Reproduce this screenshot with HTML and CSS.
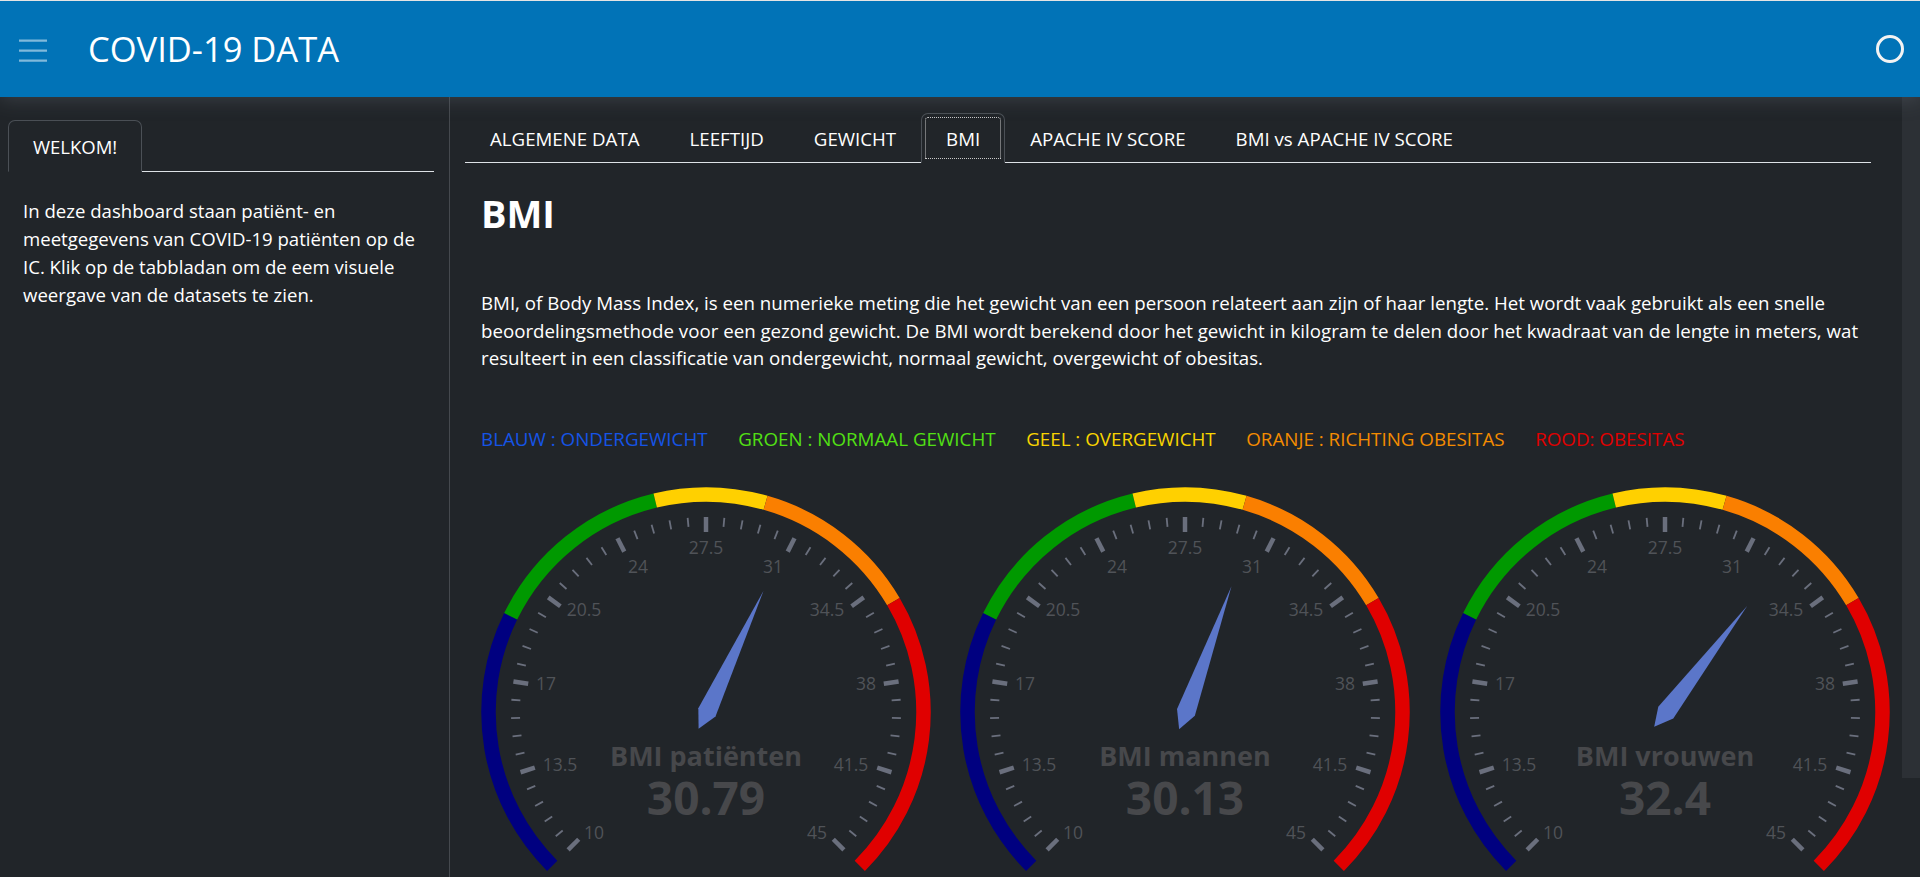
FILE: index.html
```html
<!DOCTYPE html>
<html lang="nl">
<head>
<meta charset="utf-8">
<title>COVID-19 DATA</title>
<link rel="stylesheet" href="styles.css">
</head>
<body>
<svg class="defs" aria-hidden="true">
  <defs>
    <g id="dial">
      <path class="band band-blue" d="M -153.80 153.80 A 217.5 217.5 0 0 1 -195.32 -95.69"/>
      <path class="band band-green" d="M -195.32 -95.69 A 217.5 217.5 0 0 1 -50.78 -211.49"/>
      <path class="band band-yellow" d="M -50.78 -211.49 A 217.5 217.5 0 0 1 59.59 -209.18"/>
      <path class="band band-orange" d="M 59.59 -209.18 A 217.5 217.5 0 0 1 187.40 -110.39"/>
      <path class="band band-red" d="M 187.40 -110.39 A 217.5 217.5 0 0 1 153.80 153.80"/>
      <g class="ticks">
        <line class="tick major" y1="-195" y2="-180" transform="rotate(-135)"/>
        <line class="tick" y1="-195" y2="-186" transform="rotate(-129.6)"/>
        <line class="tick" y1="-195" y2="-186" transform="rotate(-124.2)"/>
        <line class="tick" y1="-195" y2="-186" transform="rotate(-118.8)"/>
        <line class="tick" y1="-195" y2="-186" transform="rotate(-113.4)"/>
        <line class="tick major" y1="-195" y2="-180" transform="rotate(-108)"/>
        <line class="tick" y1="-195" y2="-186" transform="rotate(-102.6)"/>
        <line class="tick" y1="-195" y2="-186" transform="rotate(-97.2)"/>
        <line class="tick" y1="-195" y2="-186" transform="rotate(-91.8)"/>
        <line class="tick" y1="-195" y2="-186" transform="rotate(-86.4)"/>
        <line class="tick major" y1="-195" y2="-180" transform="rotate(-81)"/>
        <line class="tick" y1="-195" y2="-186" transform="rotate(-75.6)"/>
        <line class="tick" y1="-195" y2="-186" transform="rotate(-70.2)"/>
        <line class="tick" y1="-195" y2="-186" transform="rotate(-64.8)"/>
        <line class="tick" y1="-195" y2="-186" transform="rotate(-59.4)"/>
        <line class="tick major" y1="-195" y2="-180" transform="rotate(-54)"/>
        <line class="tick" y1="-195" y2="-186" transform="rotate(-48.6)"/>
        <line class="tick" y1="-195" y2="-186" transform="rotate(-43.2)"/>
        <line class="tick" y1="-195" y2="-186" transform="rotate(-37.8)"/>
        <line class="tick" y1="-195" y2="-186" transform="rotate(-32.4)"/>
        <line class="tick major" y1="-195" y2="-180" transform="rotate(-27)"/>
        <line class="tick" y1="-195" y2="-186" transform="rotate(-21.6)"/>
        <line class="tick" y1="-195" y2="-186" transform="rotate(-16.2)"/>
        <line class="tick" y1="-195" y2="-186" transform="rotate(-10.8)"/>
        <line class="tick" y1="-195" y2="-186" transform="rotate(-5.4)"/>
        <line class="tick major" y1="-195" y2="-180" transform="rotate(0)"/>
        <line class="tick" y1="-195" y2="-186" transform="rotate(5.4)"/>
        <line class="tick" y1="-195" y2="-186" transform="rotate(10.8)"/>
        <line class="tick" y1="-195" y2="-186" transform="rotate(16.2)"/>
        <line class="tick" y1="-195" y2="-186" transform="rotate(21.6)"/>
        <line class="tick major" y1="-195" y2="-180" transform="rotate(27)"/>
        <line class="tick" y1="-195" y2="-186" transform="rotate(32.4)"/>
        <line class="tick" y1="-195" y2="-186" transform="rotate(37.8)"/>
        <line class="tick" y1="-195" y2="-186" transform="rotate(43.2)"/>
        <line class="tick" y1="-195" y2="-186" transform="rotate(48.6)"/>
        <line class="tick major" y1="-195" y2="-180" transform="rotate(54)"/>
        <line class="tick" y1="-195" y2="-186" transform="rotate(59.4)"/>
        <line class="tick" y1="-195" y2="-186" transform="rotate(64.8)"/>
        <line class="tick" y1="-195" y2="-186" transform="rotate(70.2)"/>
        <line class="tick" y1="-195" y2="-186" transform="rotate(75.6)"/>
        <line class="tick major" y1="-195" y2="-180" transform="rotate(81)"/>
        <line class="tick" y1="-195" y2="-186" transform="rotate(86.4)"/>
        <line class="tick" y1="-195" y2="-186" transform="rotate(91.8)"/>
        <line class="tick" y1="-195" y2="-186" transform="rotate(97.2)"/>
        <line class="tick" y1="-195" y2="-186" transform="rotate(102.6)"/>
        <line class="tick major" y1="-195" y2="-180" transform="rotate(108)"/>
        <line class="tick" y1="-195" y2="-186" transform="rotate(113.4)"/>
        <line class="tick" y1="-195" y2="-186" transform="rotate(118.8)"/>
        <line class="tick" y1="-195" y2="-186" transform="rotate(124.2)"/>
        <line class="tick" y1="-195" y2="-186" transform="rotate(129.6)"/>
        <line class="tick major" y1="-195" y2="-180" transform="rotate(135)"/>
      </g>
      <g class="scale">
        <text x="-112" y="127.2">10</text>
        <text x="-146" y="58.7">13.5</text>
        <text x="-160" y="-21.8">17</text>
        <text x="-122" y="-96.3">20.5</text>
        <text x="-68" y="-138.8">24</text>
        <text x="0" y="-157.8">27.5</text>
        <text x="67" y="-138.8">31</text>
        <text x="121" y="-96.3">34.5</text>
        <text x="160" y="-21.8">38</text>
        <text x="145" y="58.7">41.5</text>
        <text x="111" y="127.2">45</text>
      </g>
    </g>
  </defs>
</svg>

<header class="topbar">
  <button class="menu-btn" type="button" aria-label="Menu">
    <svg class="menu-icon" viewBox="0 0 28 28" width="28" height="28"><path d="M0 5.7h28M0 15.7h28M0 25.7h28"/></svg>
  </button>
  <h1 class="brand">COVID-19 DATA</h1>
  <span class="spinner" aria-hidden="true"></span>
</header>

<div class="layout">
  <aside class="sidebar">
    <nav class="tabs side-tabs">
      <a class="tab active" href="#">WELKOM!</a>
    </nav>
    <p class="intro">In deze dashboard staan patiënt- en meetgegevens van COVID-19 patiënten op de IC. Klik op de tabbladan om de eem visuele weergave van de datasets te zien.</p>
  </aside>

  <main class="main">
    <nav class="tabs main-tabs">
      <a class="tab" href="#">ALGEMENE DATA</a>
      <a class="tab" href="#">LEEFTIJD</a>
      <a class="tab" href="#">GEWICHT</a>
      <a class="tab active focused" href="#">BMI</a>
      <a class="tab" href="#">APACHE IV SCORE</a>
      <a class="tab" href="#">BMI vs APACHE IV SCORE</a>
    </nav>

    <section class="pane">
      <h2 class="pane-title">BMI</h2>
      <p class="pane-text">BMI, of Body Mass Index, is een numerieke meting die het gewicht van een persoon relateert aan zijn of haar lengte. Het wordt vaak gebruikt als een snelle<br>beoordelingsmethode voor een gezond gewicht. De BMI wordt berekend door het gewicht in kilogram te delen door het kwadraat van de lengte in meters, wat<br>resulteert in een classificatie van ondergewicht, normaal gewicht, overgewicht of obesitas.</p>

      <div class="legend">
        <span class="legend-item l-blue">BLAUW : ONDERGEWICHT</span>
        <span class="legend-item l-green">GROEN : NORMAAL GEWICHT</span>
        <span class="legend-item l-yellow">GEEL : OVERGEWICHT</span>
        <span class="legend-item l-orange">ORANJE : RICHTING OBESITAS</span>
        <span class="legend-item l-red">ROOD: OBESITAS</span>
      </div>

      <div class="gauges">
        <svg class="gauge" viewBox="-235 -230 470 460" width="470" height="460" role="img" aria-label="BMI patiënten 30.79">
          <use href="#dial"/>
          <text class="g-title" x="0" y="53.5">BMI patiënten</text>
          <text class="g-value" x="0" y="102.5">30.79</text>
          <polygon class="needle" points="0,-134 10.5,0 0.5,18.3 -8.5,0" transform="rotate(25.38)"/>
        </svg>
        <svg class="gauge" viewBox="-235 -230 470 460" width="470" height="460" role="img" aria-label="BMI mannen 30.13">
          <use href="#dial"/>
          <text class="g-title" x="0" y="53.5">BMI mannen</text>
          <text class="g-value" x="0" y="102.5">30.13</text>
          <polygon class="needle" points="0,-134 10.5,0 0.5,18.3 -8.5,0" transform="rotate(20.29)"/>
        </svg>
        <svg class="gauge" viewBox="-235 -230 470 460" width="470" height="460" role="img" aria-label="BMI vrouwen 32.4">
          <use href="#dial"/>
          <text class="g-title" x="0" y="53.5">BMI vrouwen</text>
          <text class="g-value" x="0" y="102.5">32.4</text>
          <polygon class="needle" points="0,-134 10.5,0 0.5,18.3 -8.5,0" transform="rotate(37.8)"/>
        </svg>
      </div>
    </section>
  </main>

  <div class="scrollbar" aria-hidden="true">
    <div class="scroll-thumb"></div>
  </div>
</div>
</body>
</html>
```

FILE: styles.css
```css
* { box-sizing: border-box; }

html, body {
  margin: 0;
  height: 100%;
}

body {
  background: #212529;
  color: #fff;
  font-family: "Open Sans", "Noto Sans", sans-serif;
  overflow: hidden;
}

.defs {
  position: absolute;
  width: 0;
  height: 0;
  overflow: hidden;
}

/* ---------- top bar ---------- */
.topbar {
  position: relative;
  z-index: 2;
  height: 97px;
  border-top: 1px solid #e4e4e4;
  background: #0173b7;
  display: flex;
  align-items: center;
  padding: 0 16px 0 19px;
  box-shadow: 0 2px 18px rgba(110, 118, 128, 0.35);
}

.menu-btn {
  display: flex;
  width: 28px;
  height: 28px;
  padding: 0;
  border: 0;
  background: none;
}

.menu-icon {
  fill: none;
  stroke: rgba(255, 255, 255, 0.5);
  stroke-width: 2.2;
}

.brand {
  margin: 0 0 0 41px;
  font-size: 34.5px;
  font-weight: 400;
  line-height: 1.2;
  color: #fff;
}

.spinner {
  margin-left: auto;
  width: 28px;
  height: 28px;
  border: 3px solid #f3f3f3;
  border-radius: 50%;
}

/* ---------- layout ---------- */
.layout {
  display: flex;
  height: 780px;
}

.sidebar {
  flex: none;
  width: 450px;
  border-right: 1px solid #45494e;
  padding: 23px 15px 0 8px;
}

.main {
  flex: 1;
  min-width: 0;
  overflow: hidden;
  padding: 16px 31px 0 15px;
}

.scrollbar {
  flex: none;
  width: 18px;
  background: #212529;
}

.scroll-thumb {
  height: 681px;
  background: #2c3035;
}

/* ---------- tabs ---------- */
.tabs {
  display: flex;
  border-bottom: 1px solid #dee2e6;
}

.tab {
  display: block;
  padding: 11.5px 24px;
  margin-bottom: -1px;
  border: 1px solid transparent;
  border-radius: 7px 7px 0 0;
  font-size: 18.7px;
  line-height: 25px;
  color: #fff;
  text-decoration: none;
  white-space: nowrap;
}

.side-tabs .tab {
  padding: 12.5px 24px;
  font-size: 18.5px;
}

.tab.active {
  border-color: #4b5056 #4b5056 transparent;
  background: #212529;
}

.tab.focused {
  outline: 1px dotted #c9c9c9;
  outline-offset: -5px;
}

.intro {
  margin: 24.6px 0 0 15px;
  font-size: 18.6px;
  line-height: 28.3px;
}

/* ---------- BMI pane ---------- */
.pane {
  padding: 25.5px 0 48px 16px;
}

.pane-title {
  margin: 0;
  font-size: 38px;
  font-weight: 700;
  line-height: 48px;
}

.pane-text {
  margin: 52.5px 0 0;
  font-size: 18.7px;
  line-height: 27.6px;
  white-space: nowrap;
}

.legend {
  display: flex;
  gap: 30.5px;
  margin-top: 54.9px;
  font-size: 18.8px;
  line-height: 25px;
}

.l-blue { color: #1554e6; }
.l-green { color: #52e014; }
.l-yellow { color: #f8d400; }
.l-orange { color: #f48c00; }
.l-red { color: #e00000; }

.gauges {
  display: flex;
  gap: 9.6px;
  margin: 30.2px 0 0 -10.5px;
}

.gauge {
  flex: none;
  display: block;
  overflow: visible;
}

.band {
  fill: none;
  stroke-width: 14.5;
}
.band-blue { stroke: #000080; }
.band-green { stroke: #009900; }
.band-yellow { stroke: #ffd000; }
.band-orange { stroke: #fa7f00; }
.band-red { stroke: #e00000; }

.tick {
  stroke: #6a6f7d;
  stroke-width: 1.8;
}
.tick.major { stroke-width: 4.5; }

.scale text {
  font-family: "Open Sans", "Noto Sans", sans-serif;
  font-size: 17.5px;
  fill: #505358;
  text-anchor: middle;
}

.g-title,
.g-value {
  font-family: "Open Sans", "Noto Sans", sans-serif;
  font-weight: 700;
  fill: #47484b;
  text-anchor: middle;
}
.g-title { font-size: 27px; }
.g-value { font-size: 46px; }

.needle { fill: #5b76c9; }
```
